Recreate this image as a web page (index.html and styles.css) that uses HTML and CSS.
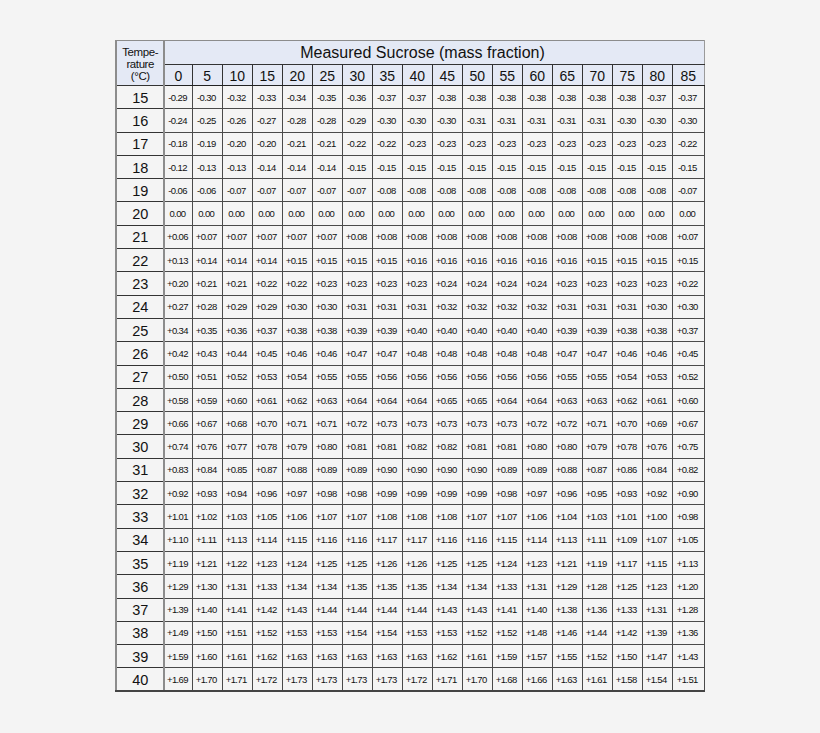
FILE: index.html
```html
<!DOCTYPE html>
<html lang="en">
<head>
<meta charset="utf-8">
<title>Sucrose temperature correction</title>
<link rel="stylesheet" href="styles.css">
</head>
<body>
<main class="page">
<table class="sheet">
<colgroup>
<col class="c-label"><col class="c-first"><col span="16" class="c-std"><col class="c-last">
</colgroup>
<thead>
<tr class="r-title">
<th class="corner" rowspan="2">Tempe-<br>rature<br>(°C)</th>
<th class="title" colspan="18">Measured Sucrose (mass fraction)</th>
</tr>
<tr class="r-cols">
<th>0</th><th>5</th><th>10</th><th>15</th><th>20</th><th>25</th><th>30</th><th>35</th><th>40</th><th>45</th><th>50</th><th>55</th><th>60</th><th>65</th><th>70</th><th>75</th><th>80</th><th>85</th>
</tr>
</thead>
<tbody>
<tr><th>15</th><td>-0.29</td><td>-0.30</td><td>-0.32</td><td>-0.33</td><td>-0.34</td><td>-0.35</td><td>-0.36</td><td>-0.37</td><td>-0.37</td><td>-0.38</td><td>-0.38</td><td>-0.38</td><td>-0.38</td><td>-0.38</td><td>-0.38</td><td>-0.38</td><td>-0.37</td><td>-0.37</td></tr>
<tr><th>16</th><td>-0.24</td><td>-0.25</td><td>-0.26</td><td>-0.27</td><td>-0.28</td><td>-0.28</td><td>-0.29</td><td>-0.30</td><td>-0.30</td><td>-0.30</td><td>-0.31</td><td>-0.31</td><td>-0.31</td><td>-0.31</td><td>-0.31</td><td>-0.30</td><td>-0.30</td><td>-0.30</td></tr>
<tr><th>17</th><td>-0.18</td><td>-0.19</td><td>-0.20</td><td>-0.20</td><td>-0.21</td><td>-0.21</td><td>-0.22</td><td>-0.22</td><td>-0.23</td><td>-0.23</td><td>-0.23</td><td>-0.23</td><td>-0.23</td><td>-0.23</td><td>-0.23</td><td>-0.23</td><td>-0.23</td><td>-0.22</td></tr>
<tr><th>18</th><td>-0.12</td><td>-0.13</td><td>-0.13</td><td>-0.14</td><td>-0.14</td><td>-0.14</td><td>-0.15</td><td>-0.15</td><td>-0.15</td><td>-0.15</td><td>-0.15</td><td>-0.15</td><td>-0.15</td><td>-0.15</td><td>-0.15</td><td>-0.15</td><td>-0.15</td><td>-0.15</td></tr>
<tr><th>19</th><td>-0.06</td><td>-0.06</td><td>-0.07</td><td>-0.07</td><td>-0.07</td><td>-0.07</td><td>-0.07</td><td>-0.08</td><td>-0.08</td><td>-0.08</td><td>-0.08</td><td>-0.08</td><td>-0.08</td><td>-0.08</td><td>-0.08</td><td>-0.08</td><td>-0.08</td><td>-0.07</td></tr>
<tr><th>20</th><td>0.00</td><td>0.00</td><td>0.00</td><td>0.00</td><td>0.00</td><td>0.00</td><td>0.00</td><td>0.00</td><td>0.00</td><td>0.00</td><td>0.00</td><td>0.00</td><td>0.00</td><td>0.00</td><td>0.00</td><td>0.00</td><td>0.00</td><td>0.00</td></tr>
<tr><th>21</th><td>+0.06</td><td>+0.07</td><td>+0.07</td><td>+0.07</td><td>+0.07</td><td>+0.07</td><td>+0.08</td><td>+0.08</td><td>+0.08</td><td>+0.08</td><td>+0.08</td><td>+0.08</td><td>+0.08</td><td>+0.08</td><td>+0.08</td><td>+0.08</td><td>+0.08</td><td>+0.07</td></tr>
<tr><th>22</th><td>+0.13</td><td>+0.14</td><td>+0.14</td><td>+0.14</td><td>+0.15</td><td>+0.15</td><td>+0.15</td><td>+0.15</td><td>+0.16</td><td>+0.16</td><td>+0.16</td><td>+0.16</td><td>+0.16</td><td>+0.16</td><td>+0.15</td><td>+0.15</td><td>+0.15</td><td>+0.15</td></tr>
<tr><th>23</th><td>+0.20</td><td>+0.21</td><td>+0.21</td><td>+0.22</td><td>+0.22</td><td>+0.23</td><td>+0.23</td><td>+0.23</td><td>+0.23</td><td>+0.24</td><td>+0.24</td><td>+0.24</td><td>+0.24</td><td>+0.23</td><td>+0.23</td><td>+0.23</td><td>+0.23</td><td>+0.22</td></tr>
<tr><th>24</th><td>+0.27</td><td>+0.28</td><td>+0.29</td><td>+0.29</td><td>+0.30</td><td>+0.30</td><td>+0.31</td><td>+0.31</td><td>+0.31</td><td>+0.32</td><td>+0.32</td><td>+0.32</td><td>+0.32</td><td>+0.31</td><td>+0.31</td><td>+0.31</td><td>+0.30</td><td>+0.30</td></tr>
<tr><th>25</th><td>+0.34</td><td>+0.35</td><td>+0.36</td><td>+0.37</td><td>+0.38</td><td>+0.38</td><td>+0.39</td><td>+0.39</td><td>+0.40</td><td>+0.40</td><td>+0.40</td><td>+0.40</td><td>+0.40</td><td>+0.39</td><td>+0.39</td><td>+0.38</td><td>+0.38</td><td>+0.37</td></tr>
<tr><th>26</th><td>+0.42</td><td>+0.43</td><td>+0.44</td><td>+0.45</td><td>+0.46</td><td>+0.46</td><td>+0.47</td><td>+0.47</td><td>+0.48</td><td>+0.48</td><td>+0.48</td><td>+0.48</td><td>+0.48</td><td>+0.47</td><td>+0.47</td><td>+0.46</td><td>+0.46</td><td>+0.45</td></tr>
<tr><th>27</th><td>+0.50</td><td>+0.51</td><td>+0.52</td><td>+0.53</td><td>+0.54</td><td>+0.55</td><td>+0.55</td><td>+0.56</td><td>+0.56</td><td>+0.56</td><td>+0.56</td><td>+0.56</td><td>+0.56</td><td>+0.55</td><td>+0.55</td><td>+0.54</td><td>+0.53</td><td>+0.52</td></tr>
<tr><th>28</th><td>+0.58</td><td>+0.59</td><td>+0.60</td><td>+0.61</td><td>+0.62</td><td>+0.63</td><td>+0.64</td><td>+0.64</td><td>+0.64</td><td>+0.65</td><td>+0.65</td><td>+0.64</td><td>+0.64</td><td>+0.63</td><td>+0.63</td><td>+0.62</td><td>+0.61</td><td>+0.60</td></tr>
<tr><th>29</th><td>+0.66</td><td>+0.67</td><td>+0.68</td><td>+0.70</td><td>+0.71</td><td>+0.71</td><td>+0.72</td><td>+0.73</td><td>+0.73</td><td>+0.73</td><td>+0.73</td><td>+0.73</td><td>+0.72</td><td>+0.72</td><td>+0.71</td><td>+0.70</td><td>+0.69</td><td>+0.67</td></tr>
<tr><th>30</th><td>+0.74</td><td>+0.76</td><td>+0.77</td><td>+0.78</td><td>+0.79</td><td>+0.80</td><td>+0.81</td><td>+0.81</td><td>+0.82</td><td>+0.82</td><td>+0.81</td><td>+0.81</td><td>+0.80</td><td>+0.80</td><td>+0.79</td><td>+0.78</td><td>+0.76</td><td>+0.75</td></tr>
<tr><th>31</th><td>+0.83</td><td>+0.84</td><td>+0.85</td><td>+0.87</td><td>+0.88</td><td>+0.89</td><td>+0.89</td><td>+0.90</td><td>+0.90</td><td>+0.90</td><td>+0.90</td><td>+0.89</td><td>+0.89</td><td>+0.88</td><td>+0.87</td><td>+0.86</td><td>+0.84</td><td>+0.82</td></tr>
<tr><th>32</th><td>+0.92</td><td>+0.93</td><td>+0.94</td><td>+0.96</td><td>+0.97</td><td>+0.98</td><td>+0.98</td><td>+0.99</td><td>+0.99</td><td>+0.99</td><td>+0.99</td><td>+0.98</td><td>+0.97</td><td>+0.96</td><td>+0.95</td><td>+0.93</td><td>+0.92</td><td>+0.90</td></tr>
<tr><th>33</th><td>+1.01</td><td>+1.02</td><td>+1.03</td><td>+1.05</td><td>+1.06</td><td>+1.07</td><td>+1.07</td><td>+1.08</td><td>+1.08</td><td>+1.08</td><td>+1.07</td><td>+1.07</td><td>+1.06</td><td>+1.04</td><td>+1.03</td><td>+1.01</td><td>+1.00</td><td>+0.98</td></tr>
<tr><th>34</th><td>+1.10</td><td>+1.11</td><td>+1.13</td><td>+1.14</td><td>+1.15</td><td>+1.16</td><td>+1.16</td><td>+1.17</td><td>+1.17</td><td>+1.16</td><td>+1.16</td><td>+1.15</td><td>+1.14</td><td>+1.13</td><td>+1.11</td><td>+1.09</td><td>+1.07</td><td>+1.05</td></tr>
<tr><th>35</th><td>+1.19</td><td>+1.21</td><td>+1.22</td><td>+1.23</td><td>+1.24</td><td>+1.25</td><td>+1.25</td><td>+1.26</td><td>+1.26</td><td>+1.25</td><td>+1.25</td><td>+1.24</td><td>+1.23</td><td>+1.21</td><td>+1.19</td><td>+1.17</td><td>+1.15</td><td>+1.13</td></tr>
<tr><th>36</th><td>+1.29</td><td>+1.30</td><td>+1.31</td><td>+1.33</td><td>+1.34</td><td>+1.34</td><td>+1.35</td><td>+1.35</td><td>+1.35</td><td>+1.34</td><td>+1.34</td><td>+1.33</td><td>+1.31</td><td>+1.29</td><td>+1.28</td><td>+1.25</td><td>+1.23</td><td>+1.20</td></tr>
<tr><th>37</th><td>+1.39</td><td>+1.40</td><td>+1.41</td><td>+1.42</td><td>+1.43</td><td>+1.44</td><td>+1.44</td><td>+1.44</td><td>+1.44</td><td>+1.43</td><td>+1.43</td><td>+1.41</td><td>+1.40</td><td>+1.38</td><td>+1.36</td><td>+1.33</td><td>+1.31</td><td>+1.28</td></tr>
<tr><th>38</th><td>+1.49</td><td>+1.50</td><td>+1.51</td><td>+1.52</td><td>+1.53</td><td>+1.53</td><td>+1.54</td><td>+1.54</td><td>+1.53</td><td>+1.53</td><td>+1.52</td><td>+1.52</td><td>+1.48</td><td>+1.46</td><td>+1.44</td><td>+1.42</td><td>+1.39</td><td>+1.36</td></tr>
<tr><th>39</th><td>+1.59</td><td>+1.60</td><td>+1.61</td><td>+1.62</td><td>+1.63</td><td>+1.63</td><td>+1.63</td><td>+1.63</td><td>+1.63</td><td>+1.62</td><td>+1.61</td><td>+1.59</td><td>+1.57</td><td>+1.55</td><td>+1.52</td><td>+1.50</td><td>+1.47</td><td>+1.43</td></tr>
<tr><th>40</th><td>+1.69</td><td>+1.70</td><td>+1.71</td><td>+1.72</td><td>+1.73</td><td>+1.73</td><td>+1.73</td><td>+1.73</td><td>+1.72</td><td>+1.71</td><td>+1.70</td><td>+1.68</td><td>+1.66</td><td>+1.63</td><td>+1.61</td><td>+1.58</td><td>+1.54</td><td>+1.51</td></tr>
</tbody>
</table>
</main>
</body>
</html>
```

FILE: styles.css
```css
html, body {
  margin: 0;
  padding: 0;
  background: #f4f4f4;
}

.page {
  display: flex;
  justify-content: center;
  padding-top: 40px;
}

.sheet {
  border-collapse: collapse;
  table-layout: fixed;
  width: 588px;
  font-family: "Liberation Sans", Arial, sans-serif;
  color: #111;
  border-top: 1px solid #8c8c8c;
  border-left: 2px solid #8c8c8c;
  border-right: 1px solid #555;
  border-bottom: 2px solid #444;
}

.c-label { width: 48px; }
.c-first { width: 28px; }
.c-std { width: 30px; }
.c-last { width: 32px; }

.sheet th,
.sheet td {
  padding: 0;
  text-align: center;
  vertical-align: middle;
  overflow: hidden;
  white-space: nowrap;
}

.sheet thead th {
  background: #e4e9f5;
  font-weight: normal;
}

.r-title { height: 24px; }
.r-cols { height: 21px; }

.corner {
  font-size: 11.5px;
  line-height: 12px;
  letter-spacing: -0.4px;
  border-right: 2px solid #8c8c8c;
  border-bottom: 1px solid #333;
  padding-top: 1px !important;
}

.title {
  font-size: 16px;
  line-height: 18px;
  text-align: center;
  padding-right: 24px !important;
  border-bottom: 1px solid #333;
  border-right: 1px solid #9a9a9a;
}

.r-cols th {
  font-size: 14px;
  line-height: 16px;
  border-left: 1px solid #333;
  border-bottom: 1px solid #222;
  padding-top: 2px !important;
}

.r-cols th:last-child {
  border-right: 1px solid #9a9a9a;
}

.sheet tbody tr {
  height: 23.3px;
}

.sheet tbody th {
  font-weight: normal;
  font-size: 14.5px;
  border-right: 2px solid #8c8c8c;
  border-bottom: 1px solid #333;
  padding-top: 1px;
}

.sheet tbody td {
  font-size: 9.5px;
  letter-spacing: -0.6px;
  border: 1px solid #4a4a4a;
  padding-right: 2px;
}

.sheet tbody tr:last-child th,
.sheet tbody tr:last-child td {
  border-bottom: 2px solid #444;
}
```
